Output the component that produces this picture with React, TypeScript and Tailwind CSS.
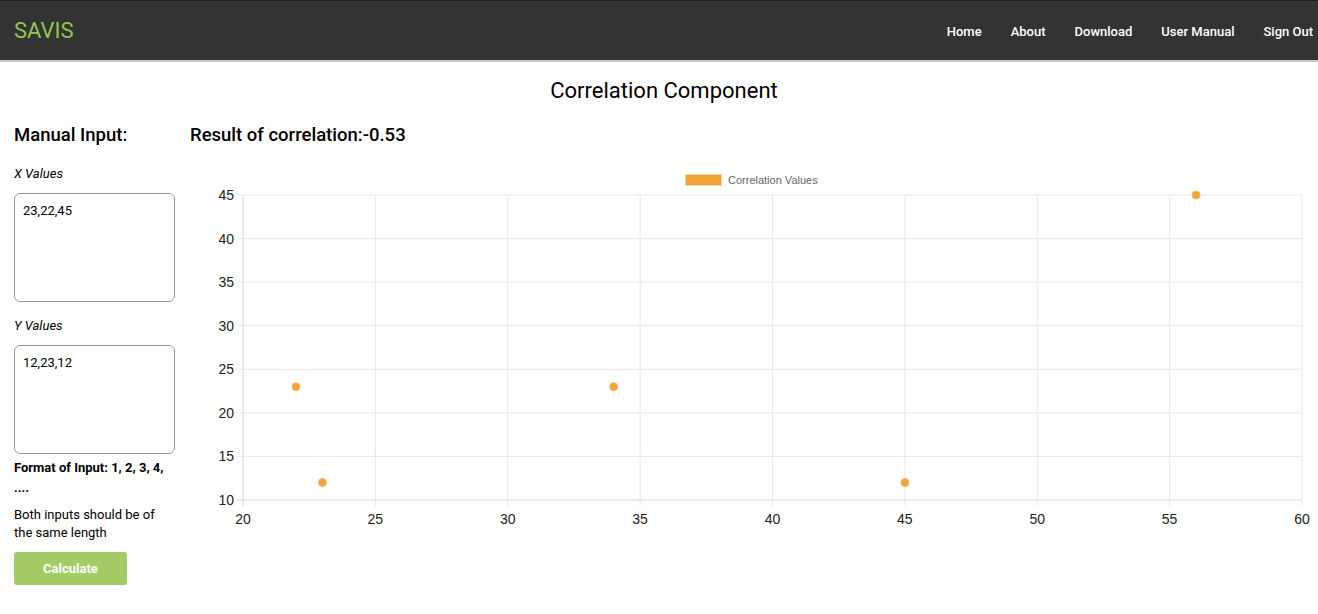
import React from 'react';

const navLinks = ['Home', 'About', 'Download', 'User Manual', 'Sign Out'];

const points: [number, number][] = [
  [22, 23],
  [23, 12],
  [34, 23],
  [45, 12],
  [56, 45],
];

// chart area inside the svg (svg starts at page x=190)
const left = 53;
const right = 1112;
const top = 34;
const bottom = 339;
const sx = (v: number) => left + ((v - 20) / 40) * (right - left);
const sy = (v: number) => bottom - ((v - 10) / 35) * (bottom - top);

function ScatterChart() {
  const xTicks = [20, 25, 30, 35, 40, 45, 50, 55, 60];
  const yTicks = [10, 15, 20, 25, 30, 35, 40, 45];
  return (
    <svg width="1128" height="380" className="block" style={{ fontFamily: '"Liberation Sans", Arial, sans-serif' }}>
      {/* legend */}
      <rect x="495.5" y="13.5" width="36" height="11" fill="#f0a43a" stroke="#f6d2a0" strokeWidth="1" />
      <text x="538" y="23" fontSize="11" fill="#666">Correlation Values</text>

      {xTicks.map((t) => (
        <line key={`vx${t}`} x1={sx(t)} x2={sx(t)} y1={top} y2={bottom + 6} stroke={t === 20 ? '#d6d6d6' : '#e8e8e8'} strokeWidth="1" />
      ))}
      {yTicks.map((t) => (
        <line key={`hy${t}`} x1={left - 6} x2={right} y1={sy(t)} y2={sy(t)} stroke={t === 10 ? '#d6d6d6' : '#e8e8e8'} strokeWidth="1" />
      ))}

      {yTicks.map((t) => (
        <text key={`yl${t}`} x={left - 9} y={sy(t) + 5} fontSize="14" fill="#222" textAnchor="end">{t}</text>
      ))}
      {xTicks.map((t) => (
        <text key={`xl${t}`} x={sx(t)} y={bottom + 24} fontSize="14" fill="#222" textAnchor="middle">{t}</text>
      ))}

      {points.map(([x, y], i) => (
        <circle key={i} cx={sx(x)} cy={sy(y)} r="4" fill="#f0a43a" stroke="#f3b868" strokeWidth="1" />
      ))}
    </svg>
  );
}

export default function App() {
  return (
    <div className="min-h-screen bg-white text-black" style={{ fontFamily: 'Roboto, "Liberation Sans", Arial, sans-serif' }}>
      {/* Navbar */}
      <header className="h-[62px] bg-[#333333] border-t border-[#1d1d29] border-b-2 border-b-[#c4c4c4] flex items-center justify-between pl-[14px]">
        <span className="text-[22px] text-[#8fc652] leading-none">SAVIS</span>
        <nav className="flex items-center gap-[29px] pr-[5px] pt-[2px]">
          {navLinks.map((l) => (
            <a key={l} href="#" className="text-[13px] font-medium text-white">{l}</a>
          ))}
        </nav>
      </header>

      <h1 className="text-center text-[22px] mt-[15px] pl-[10px] leading-[28px]">Correlation Component</h1>

      <div className="flex mt-[18px]">
        {/* Left inputs */}
        <div className="w-[161px] ml-[14px] shrink-0">
          <h2 className="text-[18.5px] font-medium leading-[24px]">Manual Input:</h2>
          <p className="text-[13px] italic mt-[17px]">X Values</p>
          <textarea
            defaultValue="23,22,45"
            className="mt-[9px] block w-[161px] h-[109px] border border-[#9a9a9a] rounded-[6px] px-[8px] py-[7px] text-[13px] resize-none"
          />
          <p className="text-[13px] italic mt-[14px]">Y Values</p>
          <textarea
            defaultValue="12,23,12"
            className="mt-[10px] block w-[161px] h-[109px] border border-[#9a9a9a] rounded-[6px] px-[8px] py-[7px] text-[13px] resize-none"
          />
          <p className="text-[13px] font-bold mt-[4px] leading-[20px]">Format of Input: 1, 2, 3, 4, ....</p>
          <p className="text-[13px] mt-[8px] leading-[18px]">Both inputs should be of the same length</p>
          <button className="mt-[10px] w-[113px] h-[33px] bg-[#a3cb66] rounded-[3px] text-white text-[13px] font-bold">
            Calculate
          </button>
        </div>

        {/* Right result + chart */}
        <div className="ml-[15px] flex-1">
          <h2 className="text-[18.5px] font-medium leading-[24px]">Result of correlation:-0.53</h2>
          <div className="mt-[14px]">
            <ScatterChart />
          </div>
        </div>
      </div>
    </div>
  );
}
